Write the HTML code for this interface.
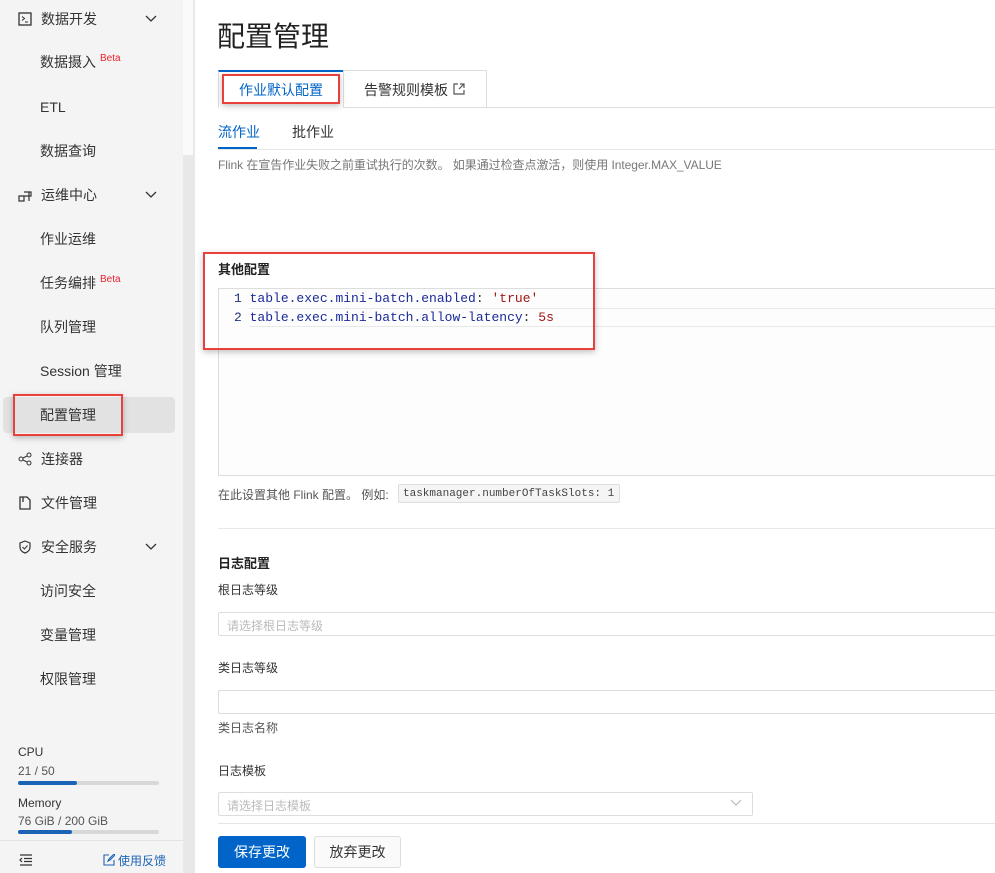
<!DOCTYPE html>
<html><head><meta charset="utf-8"><style>
*{margin:0;padding:0;box-sizing:border-box}
body{width:995px;height:873px;overflow:hidden;background:#fff;font-family:"Liberation Sans","Noto Sans CJK SC",sans-serif;color:#333;position:relative;font-size:13px}
.a{position:absolute;white-space:nowrap}
#side{position:absolute;left:0;top:0;width:183px;height:873px;background:#f4f4f4}
.si{position:absolute;left:40px;font-size:14px;color:#333;line-height:20px}
.beta{color:#e8232f;font-size:10px;vertical-align:top;margin-left:4px;position:relative;top:-3px}
.chev{position:absolute;left:145px;width:12px;height:8px}
.ic{position:absolute;left:18px;width:14px;height:14px}
.mono{font-family:"Liberation Mono","DejaVu Sans Mono",monospace}
.red{position:absolute;border:2px solid #e8413c;box-shadow:0 2px 6px rgba(0,0,0,.25)}
.lbl{position:absolute;left:218px;font-size:12px;color:#333}
.inp{position:absolute;left:218px;right:-5px;height:24px;border:1px solid #ddd;border-radius:2px;font-size:12px;color:#bbb;padding:4px 8px}
</style></head><body>
<div id="side">
<svg class="ic" style="top:12px" viewBox="0 0 14 14"><rect x="1" y="1" width="12" height="12" fill="none" stroke="#333" stroke-width="1.3"/><path d="M4 4.5l2.5 2-2.5 2M7 10h3" fill="none" stroke="#333" stroke-width="1"/></svg>
<div class="si" style="top:9px;left:41px">数据开发</div>
<svg class="chev" style="top:15px" viewBox="0 0 12 8"><path d="M1 1l5 5 5-5" fill="none" stroke="#333" stroke-width="1.3"/></svg>
<div class="si" style="top:52px">数据摄入<span class="beta">Beta</span></div>
<div class="si" style="top:97px">ETL</div>
<div class="si" style="top:141px">数据查询</div>
<svg class="ic" style="top:189px" viewBox="0 0 14 14"><path d="M1 7h5v5H1zM6 7h5v5M6 3h5v4M11 3h2v4h-2" fill="none" stroke="#333" stroke-width="1.2"/></svg>
<div class="si" style="top:185px;left:41px">运维中心</div>
<svg class="chev" style="top:191px" viewBox="0 0 12 8"><path d="M1 1l5 5 5-5" fill="none" stroke="#333" stroke-width="1.3"/></svg>
<div class="si" style="top:229px">作业运维</div>
<div class="si" style="top:273px">任务编排<span class="beta">Beta</span></div>
<div class="si" style="top:317px">队列管理</div>
<div class="si" style="top:361px">Session 管理</div>
<div style="position:absolute;left:3px;top:397px;width:172px;height:36px;background:#e2e2e2;border-radius:4px"></div>
<div class="si" style="top:405px">配置管理</div>
<svg class="ic" style="top:452px" viewBox="0 0 14 14"><circle cx="3" cy="7" r="2" fill="none" stroke="#333"/><circle cx="11" cy="3" r="2" fill="none" stroke="#333"/><circle cx="11" cy="11" r="2" fill="none" stroke="#333"/><path d="M5 6l4-2M5 8l4 2" stroke="#333"/></svg>
<div class="si" style="top:449px;left:41px">连接器</div>
<svg class="ic" style="top:496px" viewBox="0 0 14 14"><path d="M2 1h7l3 3v9H2z" fill="none" stroke="#333" stroke-width="1.3"/><path d="M5 1v5" stroke="#333" stroke-width="1.3"/></svg>
<div class="si" style="top:493px;left:41px">文件管理</div>
<svg class="ic" style="top:540px" viewBox="0 0 14 14"><path d="M7 1l5 2v4c0 3-2 5-5 6-3-1-5-3-5-6V3z" fill="none" stroke="#333" stroke-width="1.2"/><path d="M4.5 7l2 2 3-3.5" fill="none" stroke="#333"/></svg>
<div class="si" style="top:537px;left:41px">安全服务</div>
<svg class="chev" style="top:543px" viewBox="0 0 12 8"><path d="M1 1l5 5 5-5" fill="none" stroke="#333" stroke-width="1.3"/></svg>
<div class="si" style="top:581px">访问安全</div>
<div class="si" style="top:625px">变量管理</div>
<div class="si" style="top:669px">权限管理</div>
<div class="a" style="left:18px;top:745px;font-size:12px">CPU</div>
<div class="a" style="left:18px;top:764px;font-size:12px;color:#555">21 / 50</div>
<div class="a" style="left:18px;top:781px;width:141px;height:4px;background:#d8d8d8;border-radius:2px"><div style="width:59px;height:4px;background:#1b64b5;border-radius:2px"></div></div>
<div class="a" style="left:18px;top:796px;font-size:12px">Memory</div>
<div class="a" style="left:18px;top:814px;font-size:12px;color:#555">76 GiB / 200 GiB</div>
<div class="a" style="left:18px;top:830px;width:141px;height:4px;background:#d8d8d8;border-radius:2px"><div style="width:54px;height:4px;background:#1b64b5;border-radius:2px"></div></div>
<div class="a" style="left:0;top:840px;width:183px;height:1px;background:#e3e3e3"></div>
<svg class="a" style="left:19px;top:854px" width="14" height="12" viewBox="0 0 14 12"><path d="M1 1h12M5 4.5h8M5 7.5h8M1 11h12M3 4l-2 2 2 2" fill="none" stroke="#333" stroke-width="1.2"/></svg>
<svg class="a" style="left:103px;top:854px" width="12" height="12" viewBox="0 0 12 12"><path d="M6 1H1v10h10V6M5 7l1-2 5-5 1 1-5 5z" fill="none" stroke="#1b64b5" stroke-width="1.1"/></svg>
<div class="a" style="left:118px;top:852px;font-size:12px;color:#1b64b5">使用反馈</div>
</div>
<div class="a" style="left:183px;top:0;width:12px;height:873px;background:#e8e8e8"></div>
<div class="a" style="left:183px;top:0;width:10px;height:155px;background:#fafafa"></div>
<div class="red" style="left:13px;top:394px;width:110px;height:42px"></div>

<div class="a" style="left:217px;top:15px;font-size:28px;color:#222">配置管理</div>
<div class="a" style="left:218px;top:107px;right:0;height:1px;background:#ddd"></div>
<div class="a" style="left:218px;top:70px;width:126px;height:38px;background:#fff;border-top:2px solid #0064c8;border-left:1px solid #ddd"></div>
<div class="a" style="left:239px;top:80px;font-size:14px;color:#0064c8">作业默认配置</div>
<div class="a" style="left:343px;top:70px;width:144px;height:38px;border:1px solid #ddd;border-bottom:none"></div>
<div class="a" style="left:364px;top:80px;font-size:14px;color:#333">告警规则模板</div>
<svg class="a" style="left:453px;top:83px" width="12" height="12" viewBox="0 0 12 12"><path d="M5 1H1v10h10V7M7 1h4v4M11 1L6 6" fill="none" stroke="#555" stroke-width="1.2"/></svg>
<div class="red" style="left:222px;top:74px;width:118px;height:30px"></div>

<div class="a" style="left:218px;top:122px;font-size:14px;color:#0064c8">流作业</div>
<div class="a" style="left:292px;top:122px;font-size:14px;color:#333">批作业</div>
<div class="a" style="left:218px;top:149px;right:0;height:1px;background:#e5e5e5"></div>
<div class="a" style="left:218px;top:147px;width:39px;height:2px;background:#0064c8"></div>
<div class="a" style="left:218px;top:156px;font-size:12px;color:#777;letter-spacing:-0.05px">Flink 在宣告作业失败之前重试执行的次数。 如果通过检查点激活，则使用 Integer.MAX_VALUE</div>

<div class="a" style="left:218px;top:259px;font-size:13px;font-weight:bold;color:#222">其他配置</div>
<div class="a" style="left:218px;top:288px;right:-5px;height:188px;border:1px solid #ddd;background:#fdfdfd"></div>
<div class="a" style="left:249px;top:308px;right:0;height:19px;border-top:1px solid #e8e8e8;border-bottom:1px solid #e8e8e8"></div>
<div class="a mono" style="left:234px;top:289px;font-size:13px;line-height:20px"><span style="color:#237">1</span> <span style="color:#1a2a9a">table.exec.mini-batch.enabled</span>: <span style="color:#a31515">'true'</span></div>
<div class="a mono" style="left:234px;top:308px;font-size:13px;line-height:20px"><span style="color:#237">2</span> <span style="color:#1a2a9a">table.exec.mini-batch.allow-latency</span>: <span style="color:#a31515">5s</span></div>
<div class="red" style="left:203px;top:252px;width:392px;height:98px"></div>

<div class="a" style="left:218px;top:486px;font-size:12px;color:#555">在此设置其他 Flink 配置。 例如:</div>
<div class="a mono" style="left:398px;top:484px;width:222px;height:19px;border:1px solid #ddd;background:#f5f5f5;border-radius:2px;font-size:11px;padding:3px 4px;color:#444">taskmanager.numberOfTaskSlots: 1</div>
<div class="a" style="left:218px;top:528px;right:0;height:1px;background:#e8e8e8"></div>
<div class="a" style="left:218px;top:553px;font-size:13px;font-weight:bold;color:#222">日志配置</div>
<div class="lbl" style="top:581px">根日志等级</div>
<div class="inp" style="top:612px">请选择根日志等级</div>
<div class="lbl" style="top:659px">类日志等级</div>
<div class="inp" style="top:690px"></div>
<div class="lbl" style="top:719px;color:#555">类日志名称</div>
<div class="lbl" style="top:762px">日志模板</div>
<div class="inp" style="top:792px;right:auto;width:535px">请选择日志模板</div>
<svg class="a" style="left:730px;top:799px" width="12" height="8" viewBox="0 0 12 8"><path d="M1 1l5 5 5-5" fill="none" stroke="#bbb" stroke-width="1.2"/></svg>
<div class="a" style="left:218px;top:823px;right:0;height:1px;background:#e5e5e5"></div>
<div class="a" style="left:218px;top:836px;width:88px;height:32px;background:#0064c8;border-radius:3px;color:#fff;font-size:14px;text-align:center;line-height:32px">保存更改</div>
<div class="a" style="left:314px;top:836px;width:87px;height:32px;border:1px solid #ddd;border-radius:3px;color:#333;font-size:14px;text-align:center;line-height:30px;background:#fafafa">放弃更改</div>
</body></html>
